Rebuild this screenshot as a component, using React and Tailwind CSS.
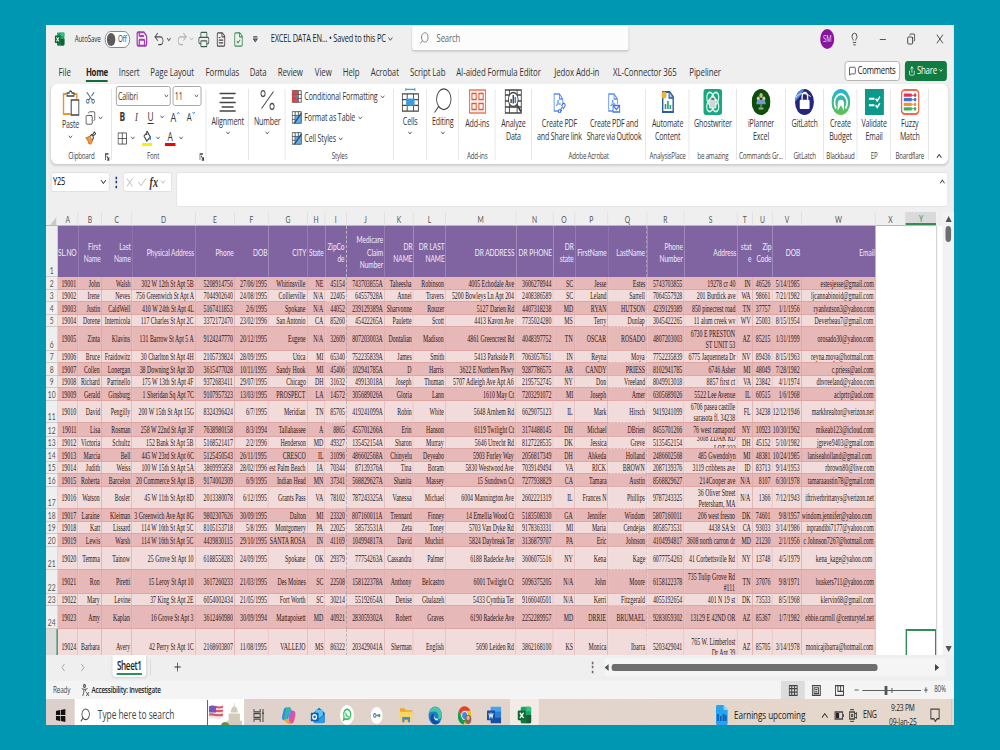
import React from 'react';
import {
  Save, Undo2, Redo2, Printer, Lightbulb, Minus, X, Search, ChevronDown, ChevronUp, ChevronLeft, ChevronRight,
  MessageSquare, Share, Scissors, Copy, Check, Plus, Copy as Restore, Percent, FileText, FileCheck,
} from 'lucide-react';

const COLS =
  'grid grid-cols-[12fr_20.3fr_23.7fr_30.3fr_63.4fr_39.3fr_33.7fr_39fr_17.6fr_21.4fr_38fr_29fr_32.3fr_70fr_37.7fr_21.3fr_33.3fr_38.7fr_37.3fr_53fr_15.4fr_20fr_29fr_74fr_30fr_30.6fr]';

const LETTERS = 'ABCDEFGHIJKLMNOPQRSTUVWXY'.split('');

const HEADERS = [
  'SL.NO', 'First\nName', 'Last\nName', 'Physical Address', 'Phone', 'DOB', 'CITY', 'State', 'ZipCo\nde',
  'Medicare\nClaim\nNumber', 'DR\nNAME', 'DR LAST\nNAME', 'DR ADDRESS', 'DR PHONE', 'DR\nstate', 'FirstName',
  'LastName', 'Phone\nNumber', 'Address', 'stat\ne', 'Zip\nCode', 'DOB', 'Email',
];

const ROW_HEIGHTS = [13, 12, 13, 12, 24, 12, 13, 12, 13, 22, 14, 12, 13, 12, 13, 22, 13, 12, 13, 23, 24, 12, 23, 36];

const ROWS = [
  '19001|John|Walsh|302 W 12th St Apt 5B|5208914756|27/06/1995|Whitinsville|NE|45154|743703855A|Taheesha|Robinson|4005 Echodale Ave|3606278944|SC|Jesse|Estes|5743703855|19278 cr 40|IN|46526|5/14/1985|estesjesse@gmail.com',
  '19002|Irene|Neves|756 Greenwich St Apt A|7044902640|24/08/1995|Collierville|N/A|22405|64557928A|Annei|Travers|5200 Bowleys Ln Apt 204|2408386589|SC|Leland|Sarrell|7064557928|201 Burdick ave|WA|98661|7/21/1982|ljcannabinoid@gmail.com',
  '19003|Justin|CaldWell|410 W 24th St Apt 4L|5167411853|2/6/1995|Spokane|N/A|44052|239129389A|Sharvonne|Rouzer|5127 Darien Rd|4407318238|MD|RYAN|HUTSON|4239129389|850 pinecrest road|TN|37757|1/1/1956|ryanhutson3@yahoo.com',
  '19004|Dorene|Internicola|117 Charles St Apt 2C|3372172470|23/02/1996|San Antonio|CA|85260|45422265A|Paulette|Scott|4413 Kavon Ave|7735024280|MS|Terry|Dunlap|3045422265|11 alum creek wv|WV|25003|8/15/1954|Deverbeau7@gmail.com',
  '19005|Zinta|Klavins|131 Barrow St Apt 5 A|9124247770|20/12/1995|Eugene|N/A|32609|807203003A|Dontalian|Madison|4861 Greencrest Rd|4048397752|TN|OSCAR|ROSADO|4807203003|6730 E PRESTON\nST UNIT 53|AZ|85215|1/31/1999|orosado30@yahoo.com',
  '19006|Bruce|Fraidowitz|30 Charlton St Apt 4H|2105739824|28/09/1995|Utica|MI|65340|752235839A|James|Smith|5413 Parkside Pl|7063057651|IN|Reyna|Moya|7752235839|6775 Jaquenneta Dr|NV|89436|8/15/1963|reyna.moya@hotmail.com',
  '19007|Collen|Lonergan|38 Downing St Apt 3D|3615477028|10/11/1995|Sandy Hook|MI|45406|102941785A|D|Harris|3622 E Northern Pkwy|9287786575|AR|CANDY|PRIESS|8102941785|6746 Asher|MI|48049|7/28/1982|c.priess@aol.com',
  '19008|Richard|Parrinello|175 W 13th St Apt 4F|9372683411|29/07/1995|Chicago|DH|31632|49913018A|Joseph|Thuman|5707 Adleigh Ave Apt A6|2195752745|NY|Don|Vreeland|8049913018|8857 first ct|VA|23842|4/1/1974|dhvreeland@yahoo.com',
  '19009|Gerald|Ginsburg|1 Sheridan Sq Apt 7C|9107957323|13/03/1995|PROSPECT|LA|14572|305689026A|Gloria|Lann|1610 May Ct|7203291072|MI|Joseph|Amer|6305689026|5522 Lee Avenue|IL|60515|1/6/1968|aclprtr@aol.com',
  '19010|David|Pengilly|200 W 15th St Apt 15G|8324396424|6/7/1995|Meridian|TN|85705|419241099A|Robin|White|5648 Arnhem Rd|6629075123|IL|Mark|Hirsch|9419241099|6706 pasea castille\nsarasota fl. 34238|FL|34238|12/12/1946|markhrealtor@verizon.net',
  '19011|Lisa|Rosman|258 W 22nd St Apt 3F|7638980158|8/3/1994|Tallahassee|A|8865|455701266A|Erin|Hanson|6119 Twilight Ct|3174488145|DH|Michael|DBrien|8455701266|76 west ramapord|NY|10923|10/30/1962|mikeab123@icloud.com',
  '19012|Victoria|Schultz|152 Bank St Apt 5B|5168521417|2/2/1996|Henderson|MD|49327|135452154A|Sharon|Murray|5646 Utrecht Rd|8127228535|DK|Jessica|Greve|5135452154|3608 ZDAR RD\nLOT 222|DH|45152|5/10/1982|jgreve9403@gmail.com',
  '19013|Marcia|Bell|445 W 23rd St Apt 6C|5125450543|26/11/1995|CRESCO|IL|31096|486602568A|Chinyelu|Deyeabo|5903 Furley Way|2056817349|DH|Ahkeda|Holland|2486602568|485 Gwendolyn|MI|48381|10/24/1985|laniseaholland@gmail.com ',
  '19014|Judith|Weiss|100 W 15th St Apt 5A|3869995858|28/02/1996|est Palm Beach|IA|70344|87139376A|Tina|Boram|5830 Westwood Ave|7039149494|VA|RICK|BROWN|2087139376|3119 cribbens ave|ID|83713|9/14/1953|rbrown80@live.com',
  '19015|Roberta|Barcelon|20 Commerce St Apt 1B|9174002309|6/9/1995|Indian Head|MN|37341|568829627A|Shanita|Massey|15 Sundown Ct|7277938829|CA|Tamara|Austin|8568829627|214Cooper ave|N/A|8107|6/30/1978|tamaraaustin78@gmail.com',
  '19016|Watson|Bosler|45 W 11th St Apt 8D|2013380078|6/12/1995|Grants Pass|VA|78102|787243325A|Vanessa|Michael|6004 Mannington Ave|2602221319|IL|Frances N|Phillips|9787243325|36 Oliver Street\nPetersham, MA|N/A|1366|7/12/1943|iftriverbrittanys@verizon.net',
  '19017|Laraine|Kleiman|3 Greenwich Ave Apt 8G|9802307626|30/09/1995|Dalton|MI|23320|807160011A|Trennard|Finney|14 Emellia Wood Ct|5183508330|GA|Jennifer|Windom|5807160011|206 west fresno|DK|74601|9/8/1957|windom.jennifer@yahoo.com ',
  '19018|Katt|Lissard|114 W 16th St Apt 5C|8105153718|5/8/1995|Montgomery|PA|22025|58573531A|Zeta|Toney|5703 Van Dyke Rd|9178363331|MI|Maria|Cendejas|8058573531|4438 SA St|CA|93033|3/14/1986|inprandibi7177@yahoo.com',
  '19019|Lewis|Warsh|114 W 16th St Apt 5C|4439830115|29/10/1995|SANTA ROSA|IN|41169|104994817A|David|Muchiri|5824 Daybreak Ter|3136879707|PA|Eric|Johnson|4104994817|3608 north carron dr|MD|21230|2/1/1956|c Johnson7267@hotmail.com',
  '19020|Temma|Tainow|25 Grove St Apt 10|6188558283|24/09/1995|Spokane|OK|29379|77754263A|Cassandra|Palmer|6188 Radecke Ave|3606075516|NY|Kena|Kage|6077754263|41 Corbettsville Rd|NY|13748|4/5/1979|kena_kage@yahoo.com ',
  '19021|Ron|Piretti|15 Leroy St Apt 10|3617260233|21/03/1995|Des Moines|SC|22508|158122378A|Anthony|Belcastro|6001 Twilight Ct|5096375205|N/A|John|Moore|6158122378|735 Tulip Grove Rd\n#111|TN|37076|9/8/1971|huskers711@yahoo.com',
  '19022|Mary|Levine|37 King St Apt 2E|6054002434|21/05/1995|Fort Worth|SC|30214|55192654A|Denise|Gbalazeh|5433 Cynthia Ter|9166040501|N/A|Kerri|Fitzgerald|4055192654|401 N 19 st|DK|73533|8/5/1968|klervin68@gmail.com',
  '19023|Amy|Kaplan|16 Grove St Apt 3|3612460980|30/09/1994|Mattapoisett|MD|40921|283059302A|Robert|Graves|6190 Radecke Ave|2252289957|MD|DRRIE|BRUMAEL|9283059302|13129 E 42ND OR|AZ|85367|1/7/1982|ebbie.carroll @centurytel.net',
  '19024|Barbara|Avery|42 Perry St Apt 1C|2168603807|11/08/1995|VALLEJO|MS|86322|203429041A|Sherman|English|5690 Leiden Rd|3862168100|KS|Monica|Ibarra|5203429041|765 W. Limberlost\nDr Apt 39|AZ|85705|3/14/1978|monicajibarra@hotmail.com',
].map((line) => line.split('|'));

const Svg = ({ className = 'w-6 h-6', box = '0 0 24 24', children }) => (
  <svg viewBox={box} className={`${className} shrink-0`} fill="none" stroke="#444" strokeWidth="1.3" preserveAspectRatio="none">
    {children}
  </svg>
);

const Caret = ({ className = 'w-[8px] h-[8px]' }) => <ChevronDown className={`${className} shrink-0`} strokeWidth={3} color="#555" />;

const ExcelLogo = ({ className }) => (
  <Svg className={className}>
    <g stroke="none">
      <rect x="6" y="1" width="17" height="22" rx="2" fill="#21a366" />
      <path d="M6 12h9v11H8a2 2 0 0 1-2-2z" fill="#107c41" />
      <path d="M15 12h8v9a2 2 0 0 1-2 2h-6z" fill="#185c37" />
      <path d="M15 1h6a2 2 0 0 1 2 2v4h-8z" fill="#33c481" />
      <rect x="1" y="6" width="13" height="13" rx="1.5" fill="#0e6b37" />
    </g>
    <path d="M4.5 9l6 7M10.5 9l-6 7" stroke="#fff" strokeWidth="1.9" />
  </Svg>
);

/* ---------- title bar and menu ---------- */

const TitleBar = () => (
  <div className="flex h-[28px] items-center text-[9px] tracking-tight text-[#333]">
    <ExcelLogo className="ml-[12px] h-[14px] w-[15px]" />
    <span className="ml-[14px] w-[43px] whitespace-nowrap text-[8.9px]">AutoSave</span>
    <span className="flex h-[17px] w-[36px] items-center rounded-full border border-[#777] bg-white pl-[2px] text-[9px]">
      <i className="mr-[4px] h-[13px] w-[12px] rounded-full bg-[#5c5c5c]" />
      Off
    </span>
    <Save className="ml-[8px] h-[18px] w-[18px] shrink-0" color="#a33fb5" strokeWidth={2.4} />
    <Undo2 className="ml-[7px] h-[18px] w-[17px] shrink-0" strokeWidth={1.6} color="#444" />
    <Caret className="ml-[1px] h-[9px] w-[9px]" />
    <Redo2 className="ml-[6px] h-[18px] w-[17px] shrink-0 opacity-35" strokeWidth={1.6} />
    <ChevronDown className="ml-[1px] h-[8px] w-[8px] shrink-0 opacity-30" strokeWidth={3} />
    <Printer className="ml-[5px] h-[17px] w-[17px] shrink-0" strokeWidth={1.7} color="#3f5f4c" />
    <FileText className="ml-[8px] h-[17px] w-[16px] shrink-0" strokeWidth={1.8} color="#444" />
    <FileCheck className="ml-[9px] h-[17px] w-[16px] shrink-0" strokeWidth={1.8} color="#3e8b56" />
    <Svg className="ml-[12px] h-[7px] w-[8px]" box="0 0 8 8">
      <path d="M1 1h6M1.5 3.500L4 6.500l2.500-3z" />
    </Svg>
    <span className="ml-[18px] w-[166px] whitespace-nowrap text-[10.6px] tracking-[-0.25px] text-[#222]">EXCEL DATA EN... • Saved to this PC</span>
    <ChevronDown className="h-[10px] w-[10px] shrink-0" strokeWidth={2.200} />
    <div className="mt-px ml-[26px] flex h-[25px] w-[309px] shrink-0 items-center self-start rounded-[3px] border-b border-[#ccc] bg-[#fcfcfc] pl-[10px] text-[11px] text-[#666] shadow-sm">
      <Search className="mr-[10px] h-[14px] w-[15px] -scale-x-100" strokeWidth={1.500} />
      Search
    </div>
    <span className="ml-[274px] flex h-[20px] w-[20px] shrink-0 items-center justify-center rounded-full bg-[#8a14a0] text-[8.500px] text-[#f3d9f7]">SM</span>
    <Lightbulb className="ml-[22px] h-[14px] w-[14px] shrink-0" strokeWidth={1.700} />
    <Minus className="ml-[27px] h-[13px] w-[13px] shrink-0" strokeWidth={1.800} />
    <Restore className="ml-[28px] h-[12px] w-[12px] shrink-0 rotate-90" strokeWidth={2} />
    <X className="ml-[27px] h-[16px] w-[16px] shrink-0" strokeWidth={1.500} />
  </div>
);

const MENU = [
  'File', 'Home', 'Insert', 'Page Layout', 'Formulas', 'Data', 'Review', 'View', 'Help', 'Acrobat', 'Script Lab',
  'AI-aided Formula Editor', 'Jedox Add-in', 'XL-Connector 365', 'Pipeliner',
];

const MenuBar = () => (
  <div className="flex h-[31px] items-center pl-[18px]">
    <div className="grid h-[26px] w-[1123px] shrink-0 grid-cols-[39px_47px_45px_79px_63px_40px_53px_40px_40px_56px_66px_140px_84px_109px_1fr] pt-[8px] text-[11.2px] leading-[16px] tracking-[-0.1px] whitespace-nowrap text-[#333]">
      {MENU.map((item) => (
        <span key={item}>
          <span className={item === 'Home' ? 'inline-block h-[18px] border-b-2 border-[#0f6b3a] font-bold tracking-[-0.4px] text-[#222]' : ''}>
            {item}
          </span>
        </span>
      ))}
    </div>
    <div className="mt-[4px] flex h-[20px] w-[79px] shrink-0 items-center justify-center gap-[2px] rounded-[4px] border border-[#aaa] bg-white text-[11.2px] tracking-[-0.3px] text-[#222]">
      <MessageSquare className="h-[10px] w-[10px]" strokeWidth={2} />
      Comments
    </div>
    <div className="mt-[4px] ml-[7px] flex h-[20px] w-[60px] shrink-0 items-center justify-center gap-[2px] rounded-[4px] bg-[#107c41] text-[11.2px] tracking-[-0.3px] text-white">
      <Share className="h-[10px] w-[10px]" strokeWidth={2} />
      Share
      <ChevronDown className="h-[7px] w-[7px]" strokeWidth={3} />
    </div>
  </div>
);

/* ---------- ribbon icons ---------- */

const PasteIcon = () => (
  <Svg className="h-[26px] w-[25px]" box="0 0 25 26">
    <path d="M6 4H2v20h10M17 4h4v5" stroke="#e8962e" strokeWidth="2" />
    <path d="M7 6V3h3a2 2 0 0 1 4 0h3v3z" fill="#fff" />
    <path d="M13 10h11v15H13z" fill="#fff" strokeWidth="1.5" />
  </Svg>
);

const BrushIcon = () => (
  <Svg className="h-[14px] w-[16px]" box="0 0 16 16">
    <path d="M1 8l6-2 4 4-3 5-3-1-1-3z" fill="#ee9a47" stroke="#d9772b" />
    <path d="M7 6l2-2 1 1 3-4 2 2-4 3 1 2-2 2" fill="#fff" />
  </Svg>
);

const StyleIcon = ({ kind }) => (
  <Svg className="h-[13px] w-[15px]" box="0 0 15 14">
    <path d="M.7.7h13v12.500H.7zM.7 4.800h13M.7 9h13M5 .7v12.500M9.500.7v12.500" fill="#fff" strokeWidth="1" />
    {kind === 0 && <path d="M1 1h8v3.500H1zM1 5h4v4H1zM1 9.500h8V13H1z" fill="#e0484e" stroke="#c8363d" strokeWidth=".6" />}
    {kind === 0 && <path d="M5.500 5.300h3.500v3.200H5.500z" fill="#4d86c6" stroke="none" />}
    {kind > 0 && <path d="M5 5h8.500v8H5z" fill="#6caee0" stroke="#2e75b6" strokeWidth=".8" />}
    {kind > 0 && <path d="M14 2L5 12l-2 1" stroke="#2b4f77" strokeWidth="1.7" />}
  </Svg>
);

const CellsIcon = () => (
  <Svg className="-mt-[3px] h-[25px] w-[25px]" box="0 0 25 26">
    <path d="M6 1.500h13M6 0v3M19 0v3" stroke="#3f9fd8" />
    <path d="M1 6h23v18H1zM1 12h23M1 18h23M8 6v18M17 6v18" />
    <path d="M6.500 11h12v7.500h-12z" fill="#3b9be0" stroke="none" />
  </Svg>
);

const AddinsIcon = () => (
  <Svg className="h-[25px] w-[25px]" box="0 0 25 25">
    <path d="M1 1h23v23H1z" stroke="#e8795a" strokeWidth="1.6" fill="#fdf1ed" />
    <path d="M4.500 4.500h6v6h-6zM14.500 4.500h6v6h-6zM4.500 14.500h6v6h-6zM14.500 14.500h6v6h-6z" stroke="#e05a35" strokeWidth="1.5" fill="#fff" />
  </Svg>
);

const AnalyzeIcon = () => (
  <Svg className="h-[25px] w-[25px]" box="0 0 25 25">
    <path d="M1 1h23v23H1zM1 6h23M1 12h23M1 18h23M7 1v23M18 1v23" />
    <circle cx="12.5" cy="10.5" r="7" fill="#fff" />
    <path d="M17.500 15.500l6 7" strokeWidth="2.2" />
    <path d="M9.500 14v-4M12.500 14.500V6" strokeWidth="2" />
    <path d="M15.500 14V8" stroke="#2e86d0" strokeWidth="2.2" />
  </Svg>
);

const PdfIcon = ({ mail }) => (
  <Svg className="mt-[2px] h-[20px] w-[19px]" box="0 0 20 20">
    <path d="M9 18H2V1h8l5 5v5M10 1v5h5" stroke="#5b8def" />
    <path d="M5 13c2-2 3-4 3-6 0 3 2 5 4 4-2 0-5 0-7 2z" stroke="#5b8def" strokeWidth="1" />
    {mail ? (
      <path d="M8.500 12.500h10v6.500h-10zM8.500 12.500l5 4 5-4" fill="#fff" stroke="#3f74dd" strokeWidth="1.4" />
    ) : (
      <path d="M11 17.500l4-4M10 16l-1.500 2a1.500 1.500 0 0 0 3 1l2-2M13 13l2-2a1.800 1.800 0 0 1 3 2.500l-2.500 2.500" stroke="#3f74dd" strokeWidth="1.4" />
    )}
  </Svg>
);

const AutomateIcon = () => (
  <Svg className="h-[22px] w-[19px]" box="0 0 19 22">
    <path d="M2 1h10l5 5v15H2z" fill="#fff" stroke="#2b5c9e" strokeWidth="2" />
    <path d="M11 1v6h6" fill="#9fc3ea" stroke="#2b5c9e" />
    <path d="M6 18v-5M9.500 18v-8M13 18v-4" stroke="#2f9a75" strokeWidth="2.3" />
    <circle cx="4" cy="4" r="3.6" fill="#f2b431" stroke="none" />
  </Svg>
);

const GhostIcon = () => (
  <Svg className="h-[26px] w-[27px]" box="0 0 27 26">
    <rect width="27" height="26" rx="4" fill="#19a782" stroke="none" />
    <g stroke="#dff5ee" strokeWidth="1.7">
      <ellipse cx="10.5" cy="10" rx="5" ry="7" transform="rotate(-25 10.5 10)" />
      <ellipse cx="16.5" cy="10" rx="5" ry="7" transform="rotate(30 16.5 10)" />
      <ellipse cx="10.5" cy="16" rx="5" ry="7" transform="rotate(30 10.5 16)" />
      <ellipse cx="16.5" cy="16" rx="5" ry="7" transform="rotate(-30 16.5 16)" />
    </g>
    <path d="M9 19v-7a4.500 4.500 0 0 1 9 0v7z" fill="#cfd6d5" stroke="#fff" strokeWidth=".8" />
    <path d="M11.500 10h4" stroke="#555" />
  </Svg>
);

const PlannerIcon = () => (
  <Svg className="h-[26px] w-[27px]">
    <circle cx="12" cy="12" r="12" fill="#0c4f0d" stroke="none" />
    <g stroke="none">
      <circle cx="12" cy="6" r="2.2" fill="#c8b48c" />
      <circle cx="8.5" cy="9" r="2" fill="#d6c7a4" />
      <circle cx="15.5" cy="9" r="2" fill="#d6c7a4" />
      <path d="M6 14c0-5 5-4 6-4s6-1 6 4z" fill="#6f9bd0" />
      <path d="M9 17h6v2H9z" fill="#9cb08f" />
    </g>
    <path d="M12 14v3" stroke="#9cb08f" />
  </Svg>
);

const LatchIcon = () => (
  <Svg className="h-[26px] w-[27px]">
    <circle cx="12" cy="12" r="12" fill="#23257e" stroke="none" />
    <path d="M0 12a12 12 0 0 1 12-12L7 6z" fill="#4f8fd8" stroke="none" />
    <path d="M1 8c5-5 13-5 19-1" stroke="#d9dcf5" strokeWidth="1" />
    <path d="M9 10V7a3.500 3.500 0 0 1 7 0v3" stroke="#fff" strokeWidth="1.7" />
    <rect x="6" y="10" width="12.5" height="8.5" rx="1" fill="#fff" stroke="none" />
  </Svg>
);

const BudgetIcon = () => (
  <Svg className="h-[26px] w-[27px]">
    <defs>
      <linearGradient id="budget" x1="0" y1="0" x2="0" y2="1">
        <stop stopColor="#1eb5d8" />
        <stop offset="1" stopColor="#63c04a" />
      </linearGradient>
    </defs>
    <circle cx="12" cy="12" r="12" fill="url(#budget)" stroke="none" />
    <path d="M6 18a8 8 0 1 1 12 0" stroke="#fff" strokeWidth="2" />
    <path d="M8 20v-6a4 4 0 0 1 8 0v6l-4-5z" fill="#fff" stroke="none" />
  </Svg>
);

const ValidateIcon = () => (
  <Svg className="h-[26px] w-[27px]">
    <path d="M0 0h24v24H0z" fill="#0b9a8a" stroke="none" />
    <path d="M5 9h7M5 15h7M13.500 9l2 2 3.500-4M13.500 15l2 2 3.500-4" stroke="#fff" strokeWidth="1.7" />
  </Svg>
);

const FuzzyIcon = () => (
  <Svg className="h-[26px] w-[27px]">
    <rect x="1" y="1" width="22" height="22" rx="4" fill="#fff" stroke="#f26a4b" strokeWidth="1.9" />
    {['#e33258', '#3577c8', '#f0913c', '#3fae5a'].map((c, i) => (
      <g key={c}>
        <path d={`M4 ${5.7 + i * 4.2}h16`} stroke={c} strokeWidth="1" />
        <path d={`M4 ${5.7 + i * 4.2}h10M17 ${5.7 + i * 4.2}h2.5`} stroke={c} strokeWidth="3" />
      </g>
    ))}
  </Svg>
);

/* ---------- ribbon ---------- */

const Group = ({ width, label, children, launcher }) => (
  <div className={`${width} relative flex shrink-0 flex-col pt-[4px]`}>
    <div className="flex-1">{children}</div>
    <div className="flex h-[14px] items-center justify-center text-[8.8px] tracking-[-0.25px] whitespace-nowrap text-[#444]">{label}</div>
    {launcher && (
      <Svg className="absolute right-[3px] bottom-[3px] h-[8px] w-[7px]" box="0 0 8 8">
        <path d="M1 7V1h5M3 3l4 4M7 4v3H4" />
      </Svg>
    )}
    <i className="absolute top-[5px] right-0 bottom-[4px] w-px bg-[#dcdcdc]" />
  </div>
);

const Big = ({ icon, lines, caret, className = '' }) => (
  <div className={`${className} flex flex-col items-center text-[10.1px] leading-[13.5px] tracking-[-0.2px] whitespace-nowrap text-[#333]`}>
    <span className="flex h-[27px] items-center justify-center">{icon}</span>
    <span className={`${caret ? '' : 'mt-[1.5px]'} text-center whitespace-pre-line`}>{lines}</span>
    {caret && <Caret className="h-[8px] w-[8px]" />}
  </div>
);

const StyleRow = ({ kind, text }) => (
  <div className="flex h-[21px] items-center text-[10px] tracking-[-0.12px] whitespace-nowrap text-[#333]">
    <StyleIcon kind={kind} />
    <span className="mr-[3px] ml-[3px]">{text}</span>
    <Caret />
  </div>
);

const Ribbon = () => (
  <div className="mx-[7px] flex h-[81px] w-[1282px] rounded-[8px] border-b border-[#cfcfcf] bg-white shadow-sm">
    <Group width="w-[87px]" label="Clipboard" launcher>
      <div className="flex pl-[14px]">
        <div className="flex w-[28px] flex-col items-center pt-[2px] text-[10px] leading-[13px] text-[#333]">
          <PasteIcon />
          <span className="mt-[2px] tracking-[-0.3px]">Paste</span>
          <Caret className="mt-[2px] h-[8px] w-[8px]" />
        </div>
        <div className="flex flex-col pl-[7px]">
          <span className="flex h-[19px] items-center"><Scissors className="h-[15px] w-[15px] -rotate-90" strokeWidth={1.7} color="#456a8c" /></span>
          <span className="flex h-[21px] items-center gap-[3px]"><Copy className="h-[16px] w-[15px] -scale-x-100" strokeWidth={1.6} color="#444" /><Caret /></span>
          <span className="flex h-[20px] items-center"><BrushIcon /></span>
        </div>
      </div>
    </Group>
    <Group width="w-[135px]" label={<span className="pr-[17px]">Font</span>} launcher>
      <div className="flex flex-col pl-[6px] text-[#333]">
        <div className="-mt-[2px] flex gap-[3px] text-[10px] tracking-[-0.2px]">
          <span className="flex h-[20px] w-[78px] items-center justify-between rounded-[3px] border border-[#999] pr-[1px] pl-[2px]">Calibri<Caret /></span>
          <span className="flex h-[20px] w-[41px] items-center justify-between rounded-[3px] border border-[#999] px-[2px]">11<Caret /></span>
        </div>
        <div className="flex h-[22px] items-center text-[12px]">
          <b className="w-[21px] pl-[5px]">B</b>
          <i className="w-[21px] pl-[6px] font-['Liberation_Serif',serif]">I</i>
          <u className="w-[20px] pl-[3px] underline-offset-2">U</u>
          <Caret />
          <span className="ml-[8px] flex w-[23px] items-start text-[13px] leading-[14px]">A<ChevronUp className="h-[6px] w-[6px]" strokeWidth={4} color="#2e86d0" /></span>
          <span className="flex items-start text-[11px] leading-[14px]">A<ChevronDown className="h-[6px] w-[6px]" strokeWidth={4} color="#2e86d0" /></span>
        </div>
        <div className="flex h-[20px] items-center">
          <Svg className="ml-[2px] h-[13px] w-[14px]" box="0 0 14 14"><path d="M1 1h12v12H1zM7 1v12M1 7h12" strokeWidth="1" /></Svg>
          <Caret className="ml-[4px] h-[8px] w-[8px]" />
          <Svg className="ml-[9px] h-[16px] w-[15px]" box="0 0 15 16">
            <path d="M3 6l5-4 4 5-5 4zM7 1v4" /><path d="M12 6v4" stroke="#2e86d0" strokeWidth="1.8" />
            <path d="M0 14.500h15" stroke="#ffee00" strokeWidth="3" />
          </Svg>
          <Caret className="ml-[4px] h-[8px] w-[8px]" />
          <span className="ml-[6px] h-[16px] w-[15px] border-b-[3px] border-[#f00] text-center text-[12px] leading-[13px]">A</span>
          <Caret className="ml-[4px] h-[8px] w-[8px]" />
        </div>
      </div>
    </Group>
    <Group width="w-[61px]">
      <Big caret lines="Alignment" icon={<Svg className="h-[20px] w-[25px]" box="0 0 25 20"><path d="M1 1.500h23M4 6h17M1 10.500h23M4 15h17M1 19h23" /></Svg>} />
    </Group>
    <Group width="w-[52px]">
      <Big caret lines="Number" icon={<Percent className="-mt-[3px] h-[28px] w-[29px]" strokeWidth={1.1} color="#444" />} />
    </Group>
    <Group width="w-[155px]" label="Styles">
      <div className="-mt-[2px] pl-[9px]">
        <StyleRow kind={0} text="Conditional Formatting" />
        <StyleRow kind={1} text="Format as Table" />
        <StyleRow kind={2} text="Cell Styles" />
      </div>
    </Group>
    <Group width="w-[46.5px]"><Big caret lines="Cells" icon={<CellsIcon />} /></Group>
    <Group width="w-[46.5px]"><Big caret lines="Editing" icon={<Search className="-mt-[2px] h-[31px] w-[32px] -scale-x-100" strokeWidth={1} color="#444" />} /></Group>
    <Group width="w-[52px]" label="Add-ins"><Big lines="Add-ins" icon={<AddinsIcon />} /></Group>
    <Group width="w-[51.5px]"><Big lines={'Analyze\nData'} icon={<AnalyzeIcon />} /></Group>
    <Group width="w-[163.5px]" label="Adobe Acrobat">
      <div className="flex pl-[4px]">
        <Big className="w-[72px]" lines={'Create PDF\nand Share link'} icon={<PdfIcon />} />
        <Big className="w-[84px] tracking-[-0.3px]" lines={'Create PDF and\nShare via Outlook'} icon={<PdfIcon mail />} />
      </div>
    </Group>
    <Group width="w-[62px]" label="AnalysisPlace"><Big lines={'Automate\nContent'} icon={<AutomateIcon />} /></Group>
    <Group width="w-[67.5px]" label="be amazing"><Big lines="Ghostwriter" icon={<GhostIcon />} /></Group>
    <Group width="w-[70px]" label="Commands Gr..."><Big lines={'iPlanner\nExcel'} icon={<PlannerIcon />} /></Group>
    <Group width="w-[54.5px]" label="GitLatch"><Big lines="GitLatch" icon={<LatchIcon />} /></Group>
    <Group width="w-[48px]" label="Blackbaud"><Big lines={'Create\nBudget'} icon={<BudgetIcon />} /></Group>
    <Group width="w-[48px]" label="EP"><Big lines={'Validate\nEmail'} icon={<ValidateIcon />} /></Group>
    <Group width="w-[54px]" label="Boardflare"><Big lines={'Fuzzy\nMatch'} icon={<FuzzyIcon />} /></Group>
    <ChevronUp className="mb-[2px] ml-[9px] h-[12px] w-[12px] self-end" strokeWidth={2.2} color="#444" />
  </div>
);

const FormulaBar = () => (
  <div className="flex h-[47px] items-start pt-[7px] pl-[7px]">
    <div className="flex h-[20px] w-[84px] items-center justify-between rounded-[3px] border border-[#ddd] bg-white px-[2px] text-[10.6px] tracking-tight">
      Y25
      <ChevronDown className="h-[12px] w-[12px]" strokeWidth={2} />
    </div>
    <div className="flex h-[20px] w-[19px] items-center justify-center text-[12px] font-bold">⋮</div>
    <div className="flex h-[20px] w-[70px] items-center gap-[3px] rounded-[3px] border border-[#ddd] bg-white pl-[1px] text-[#aaa]">
      <X className="h-[15px] w-[15px]" strokeWidth={1.4} />
      <Check className="h-[15px] w-[15px]" strokeWidth={1.4} />
      <i className="font-['Liberation_Serif',serif] text-[14.5px] leading-none font-bold text-[#333]">fx</i>
      <ChevronDown className="-ml-[1px] h-[10px] w-[10px]" strokeWidth={2} />
    </div>
    <div className="ml-[6px] flex h-[35px] w-[1103px] justify-end rounded-[3px] border border-[#e0e0e0] bg-white pt-[3px] pr-[2px]">
      <ChevronUp className="h-[11px] w-[11px]" strokeWidth={2.5} color="#444" />
    </div>
  </div>
);

/* ---------- sheet ---------- */

// page breaks are drawn after columns I and Q
const edge = (i) => (i === 8 || i === 16 ? 'border-r border-dashed border-[#8f8f8f]' : 'border-r border-[#dfa5a3]');

const Row = ({ cells, index }) => (
  <div className={`${COLS} shrink-0`} style={{ height: ROW_HEIGHTS[index] }}>
    <div className={index === 23 ? 'border-r-2 border-[#2f8f57] bg-[#dcdcdc]' : "flex items-end justify-center border-r border-b border-[#ccc] bg-[#efefef] font-['Lato'] text-[9.6px] leading-[10.5px] text-[#555]"}>
      {index < 23 && index + 2}
    </div>
    {cells.map((cell, i) => (
      <div
        key={i}
        className={`flex items-center justify-end overflow-hidden border-b border-b-[#dfa5a3] pt-px pr-[2px] ${edge(i)} ${index % 2 ? 'bg-[#f2dcdb]' : 'bg-[#e6b8b7]'}`}
      >
        <span className="origin-right scale-x-[.84] text-right leading-[11.5px] whitespace-pre">{cell}</span>
      </div>
    ))}
    <div />
    {index === 23 ? <div className="border-2 border-[#2f8f57]" /> : <div />}
  </div>
);

const Sheet = () => (
  <div className="flex h-[443px] bg-white">
    <div className="flex w-[1272px] flex-col overflow-hidden">
      <div className={`${COLS} h-[14px] shrink-0 border-b border-[#b9b9b9] bg-[#efefef] font-['Lato'] text-[9.6px] leading-[15px] text-[#555]`}>
        <div className="flex items-end justify-end p-[2px]">
          <Svg className="h-[8px] w-[9px]" box="0 0 8 8"><path d="M8 0v8H0z" fill="#c9c9c9" stroke="none" /></Svg>
        </div>
        {LETTERS.map((l) => (
          <div key={l} className={l === 'Y' ? 'h-[13px] border-b-2 border-[#2f8f57] bg-[#dadada] text-center leading-[14px] text-[#2f8f57]' : 'border-r border-[#dcdcdc] text-center'}>{l}</div>
        ))}
      </div>
      <div className={`${COLS} h-[51px] shrink-0 font-['Lato'] text-[9.8px] leading-[12.5px] tracking-[-0.05px] text-[#f1ecf6]`}>
        <div className="flex items-end justify-center border-r border-b border-[#ccc] bg-[#efefef] text-[9.6px] leading-[11px] text-[#555]">1</div>
        {HEADERS.map((h, i) => (
          <div
            key={i}
            className={`flex items-center justify-end bg-[#8064a2] pt-px pr-[2px] ${i === 8 || i === 16 ? 'overflow-hidden border-r border-dashed border-[#d5d5d5]' : 'min-w-0'}`}
          >
            <span className="origin-right scale-x-[.96] text-right whitespace-pre">{h}</span>
          </div>
        ))}
      </div>
      <div className="flex flex-1 flex-col overflow-hidden font-['Liberation_Serif',serif] text-[10px] text-[#2a1717]">
        {ROWS.map((cells, i) => <Row key={cells[0]} cells={cells} index={i} />)}
      </div>
    </div>
    <div className="w-[9px] bg-[#efefef] pt-[14px]"><div className="h-full w-full border-l border-[#bbb] bg-white" /></div>
    <div className="flex flex-1 flex-col items-center bg-[#f2f2f2] pt-[4px] pb-[3px]">
      <Svg className="h-[6px] w-[9px]" box="0 0 8 8"><path d="M4 0l4 8H0z" fill="#555" stroke="none" /></Svg>
      <i className="mt-[4px] h-[16px] w-[8px] rounded-full bg-[#6e6e6e]" />
      <Svg className="mt-auto h-[6px] w-[9px]" box="0 0 8 8"><path d="M4 8l4-8H0z" fill="#555" stroke="none" /></Svg>
    </div>
  </div>
);

const SheetTabs = () => (
  <div className="flex h-[26px] items-center bg-[#efefef] pb-[2px]">
    <ChevronLeft className="ml-[18px] h-[13px] w-[13px]" strokeWidth={1.8} color="#999" />
    <ChevronRight className="ml-[15px] h-[13px] w-[13px]" strokeWidth={1.8} color="#999" />
    <div className="ml-[36px] flex h-[22px] w-[48px] justify-center self-start rounded-b-[4px] bg-white shadow-sm">
      <span className="h-[20px] border-b-2 border-[#2f8f57] text-[11.6px] leading-[22px] font-semibold tracking-[-0.5px] text-[#222]">Sheet1</span>
    </div>
    <i className="ml-[6px] h-[16px] w-px bg-[#d5d5d5]" />
    <Plus className="ml-[31px] h-[14px] w-[14px]" strokeWidth={1.800} color="#333" />
    <span className="ml-[579px] w-[12px] text-center text-[13px] font-bold text-[#555]">⋮</span>
    <div className="ml-[12px] flex h-[18px] w-[487px] items-center bg-[#f5f5f5]">
      <Svg className="h-[7px] w-[6px]" box="0 0 8 8"><path d="M8 0v8L0 4z" fill="#555" stroke="none" /></Svg>
      <i className="ml-[4px] h-[7px] w-[380px] rounded-full bg-[#6e6e6e]" />
      <Svg className="ml-[82px] h-[7px] w-[6px]" box="0 0 8 8"><path d="M0 0v8l8-4z" fill="#444" stroke="none" /></Svg>
    </div>
  </div>
);

const StatusBar = () => (
  <div className="flex h-[18px] items-center bg-[#f4f4f4] text-[9.1px] tracking-[-0.2px] whitespace-nowrap text-[#444]">
    <span className="ml-[10px] w-[40px]">Ready</span>
    <Svg className="mr-[2px] h-[13px] w-[13px]" box="0 0 13 13">
      <circle cx="5" cy="2" r="1.4" />
      <path d="M1 4.500l3 .8v3L2.500 12M9.500 4.500l-3 .8M4 5.300h2.500v2M7.500 8l4 4M11.500 8l-4 4" strokeWidth="1" />
    </Svg>
    <span className="font-semibold tracking-[-0.3px] text-[#222]">Accessibility: Investigate</span>
    <div className="ml-auto flex h-full w-[34px] items-center justify-center bg-[#dcdcdc]">
      <Svg className="h-[11px] w-[13px]" box="0 0 12 12"><path d="M.7.7h10.600v10.600H.7zM.7 4h10.600M.7 7.700h10.600M4 .7v10.600M7.700.7v10.600" /></Svg>
    </div>
    <Svg className="ml-[10px] h-[11px] w-[13px]" box="0 0 12 12"><path d="M.7.7h10.600v10.600H.7zM3 3h6v6.500H3zM4.500 5h3M4.500 7.500h3" /></Svg>
    <Svg className="ml-[20px] h-[11px] w-[13px]" box="0 0 12 12"><path d="M.7.7h10.600v10.600H.7zM4 .7V7h7.500M7.500.7V7" /></Svg>
    <Minus className="ml-[14px] h-[8px] w-[8px]" strokeWidth={3} />
    <Svg className="ml-[4px] h-[11px] w-[84px]" box="0 0 84 11">
      <path d="M0 5.500h84" strokeWidth="1" />
      <path d="M42.500 3v5" strokeWidth="1" />
      <rect x="32" y="1" width="4" height="9" fill="#555" stroke="none" />
    </Svg>
    <Plus className="ml-[3px] h-[8px] w-[8px]" strokeWidth={2.800} />
    <span className="mr-[10px] ml-[8px] w-[18px] text-[8.800px] tracking-[-0.3px]">80%</span>
  </div>
);

/* ---------- taskbar ---------- */

const TASK_APPS = [
  <Svg key="view" className="h-[13px] w-[16px]" box="0 0 16 14"><path d="M1 0v3h9V0M1 14v-3h9v3M1 5h9v4H1zM14 0v14M12.500 4.500h3" strokeWidth="1.4" /></Svg>,
  <Svg key="copilot" className="h-[19px] w-[21px]">
    <g stroke="none">
      <path d="M8 2h7l-4 16H5c-4 0-4-4-3-7l2-6c1-2 2-3 4-3z" fill="#2b8de0" />
      <path d="M8 2h6c2 0 2 1 3 4l-4 1-4 12-5-2z" fill="#36b3a8" />
      <path d="M16 6h4c3 0 4 3 3 7l-2 6c-1 2-2 3-4 3h-6z" fill="#e3559b" />
      <path d="M5 17l6-1 4 5c-1 1-2 1-4 1-3 0-4-2-6-5z" fill="#f4a63a" />
      <path d="M14 6h6l-3 9-5 1z" fill="#a85fe0" />
    </g>
  </Svg>,
  <Svg key="outlook" className="h-[17px] w-[21px]">
    <g stroke="none">
      <path d="M5 8l9-7 9 7v14H5z" fill="#1066b8" />
      <path d="M8 4h12v8l-6 4-6-4z" fill="#59c2f2" />
      <path d="M5 11l9 6 9-6v10l-2 2H7z" fill="#2a9be8" />
      <rect y="8" width="13" height="12" rx="1" fill="#0b63b5" />
    </g>
    <circle cx="6.5" cy="14" r="3" stroke="#fff" strokeWidth="2" />
  </Svg>,
  <Svg key="whatsapp" className="h-[20px] w-[20px]">
    <circle cx="12" cy="12" r="12" fill="#fff" stroke="none" />
    <path d="M6 18l1-4a6 6 0 1 1 2.500 2.500z" stroke="#2fbf5c" strokeWidth="2" />
    <path d="M10 9c0 3 2 5 5 5" stroke="#2fbf5c" strokeWidth="1.8" />
  </Svg>,
  <Svg key="key" className="h-[17px] w-[17px]">
    <circle cx="12" cy="12" r="12" fill="#fff" stroke="none" />
    <circle cx="8" cy="12" r="2.5" stroke="#4285f4" strokeWidth="2" />
    <path d="M11 12h4" stroke="#ea4335" strokeWidth="2" />
    <circle cx="17" cy="12" r="2.3" fill="#34a853" stroke="none" />
  </Svg>,
  <Svg key="folder" className="h-[16px] w-[19px]">
    <g stroke="none">
      <path d="M1 2h8l2 3h12v5H1z" fill="#e9a823" />
      <path d="M1 7h22v16H1z" fill="#fcd462" />
      <path d="M5 23v-8h14v8h-4v-4H9v4z" fill="#3d8fd6" />
    </g>
  </Svg>,
  <Svg key="edge" className="h-[19px] w-[20px]">
    <g stroke="none">
      <circle cx="12" cy="12" r="11.5" fill="#1b7fd0" />
      <path d="M1 10C3-2 21-2 23.500 11c0 4-3 6-7 5 3-5-1-9-6-9S2 8 1 10z" fill="#44c9a0" />
      <path d="M9 13c0 5 5 8 12 6-6 8-17 3-17-4 0-4 4-6 7-5-1 0-2 1-2 3z" fill="#0f4fa0" />
      <path d="M10 12c0 3 3 5 7 4l-1 2c-4 0-7-2-6-6z" fill="#fff" />
    </g>
  </Svg>,
  <Svg key="chrome" className="h-[19px] w-[20px]">
    <g stroke="none">
      <circle cx="12" cy="12" r="11.5" fill="#f4c20d" />
      <path d="M2 6c5-8 16-7 20 0H12a6 6 0 0 0-6 5z" fill="#db4437" />
      <path d="M2 6l6 10 5 2-3 5.500C0 22-1 12 2 6z" fill="#0f9d58" />
      <circle cx="12" cy="12" r="5" fill="#4285f4" stroke="#fff" />
      <circle cx="18" cy="17" r="6" fill="#8b6b55" />
      <circle cx="18" cy="15" r="2.6" fill="#e0b99a" />
    </g>
  </Svg>,
  <Svg key="word" className="h-[18px] w-[21px]">
    <g stroke="none">
      <path d="M6 1h17v6H6z" fill="#41a5ee" />
      <path d="M6 7h17v8H6z" fill="#2b7cd3" />
      <path d="M6 15h17v8H6z" fill="#154fa5" />
      <rect y="6" width="13" height="13" rx="1" fill="#1450a8" />
    </g>
    <path d="M3 9.500l1.700 6L6.500 10l1.800 5.500L10 9.500" stroke="#fff" strokeWidth="1.5" />
  </Svg>,
];

const Taskbar = () => (
  <div className="flex h-[26px] overflow-hidden bg-gradient-to-r from-[#ddd0cc] to-[#e6d8cb] text-[#222]">
    <div className="flex w-[41px] items-center justify-center pt-[6px]">
      <Svg className="h-[13px] w-[14px]" box="0 0 14 13"><path d="M0 2l6-1v5H0zM7 .900L14 0v6H7zM0 7h6v5l-6-1zM7 7h7v6l-7-1z" fill="#111" stroke="none" /></Svg>
    </div>
    <div className="flex w-[242px] shrink-0 items-center bg-white pt-[6px] pl-[7px] text-[12px] tracking-[-0.05px] text-[#444]">
      <Search className="mr-[10px] h-[16px] w-[16px] shrink-0 -scale-x-100" strokeWidth={1.700} />
      <span className="w-[117px] whitespace-nowrap">Type here to search</span>
      <Svg className="ml-auto h-[25px] w-[53px] self-end" box="0 0 53 24">
        <g stroke="none">
          <path d="M3 6c5-2 9 2 20-1v12c-8 3-13-1-20 1z" fill="#f3e3e6" />
          <path d="M3 9c7-1 12 2 20 0v2c-8 2-13-1-20 0zM3 13c7-1 12 2 20 0v2c-8 2-13-1-20 0zM12 5.500c4 1 7 1 11 0v2c-4 1-8 1-11 0z" fill="#d65a68" />
          <path d="M3 6c4-1.500 7 0 10 0v6H3z" fill="#7557b8" />
          <path d="M0 0h1.500v24H0z" fill="#666" />
          <path d="M28 20h22v4H28zM31 13h16v7H31zM34 12a5 6 0 0 1 10 0zM38.500 3h1v4h-1z" fill="#d3cab9" />
          <path d="M20 24c2-4 9-4 12 0z" fill="#6b8b3d" />
        </g>
      </Svg>
    </div>
    {TASK_APPS.map((app) => (
      <div key={app.key} className="flex w-[42px] shrink-0 items-center justify-center pt-[6px]">{app}</div>
    ))}
    <div className="ml-[2px] flex w-[41px] items-center justify-center bg-[#f3ece6] pt-[6px]"><ExcelLogo className="h-[18px] w-[21px]" /></div>
    <div className="ml-auto flex items-center pt-[6px] text-[11.600px] tracking-[-0.1px] whitespace-nowrap">
      <Svg className="mr-[9px] h-[20px] w-[17px]" box="0 0 17 20">
        <path d="M0 2q0-2 2-2h9l6 5v13q0 2-2 2H2q-2 0-2-2z" fill="#27a4ee" stroke="none" />
        <path d="M11 0v5h6z" fill="#8fd4fa" stroke="none" />
        <path d="M3 16V9M7 16v-5M11 16V9M14 16v-6" stroke="#0b5fae" strokeWidth="2.4" />
      </Svg>
      <span className="w-[104px]">Earnings upcoming</span>
      <ChevronUp className="ml-[18px] h-[15px] w-[15px]" strokeWidth={1.700} />
      <Svg className="ml-[6px] h-[9px] w-[14px]" box="0 0 14 9"><path d="M1 1h11v7H1zM13.500 3v3" /><path d="M2 2h5v5H2z" fill="#222" stroke="none" /></Svg>
      <Svg className="ml-[7px] h-[13px] w-[12px]" box="0 0 12 13"><path d="M1 3h7v7H1zM8 5l3-1v5L8 8M2 1q3-1.500 5 0M2 12q3 1.500 5 0" /><circle cx="4.5" cy="6.5" r="1.2" /></Svg>
      <span className="ml-[8px] w-[21px] text-[10.200px] tracking-[-0.300px]">ENG</span>
    </div>
    <div className="ml-[14px] w-[44px] shrink-0 pt-[2px] text-center text-[9.600px] leading-[14px] tracking-[-0.300px] whitespace-nowrap">
      9:23 PM
      <br />
      09-Jan-25
    </div>
    <Svg className="mt-[9px] ml-[17px] h-[14px] w-[14px]" box="0 0 13 13"><path d="M1 1h11v9H9l-2 2.500L5 10H1z" /></Svg>
    <i className="mr-[3px] ml-[16px] w-px shrink-0 bg-[#cfc3b8]" />
  </div>
);

export default function App() {
  return (
    <div className="h-[750px] w-[1000px] overflow-hidden bg-[#0097b2] pt-[25px] pl-[46px]">
      {/* the window is laid out wide and squeezed horizontally */}
      <div className="h-[700px] w-[1297px] origin-top-left scale-x-[.7] overflow-hidden bg-[#efefef] font-['Open_Sans',sans-serif]">
        <TitleBar />
        <MenuBar />
        <Ribbon />
        <FormulaBar />
        <Sheet />
        <SheetTabs />
        <StatusBar />
        <Taskbar />
      </div>
    </div>
  );
}
